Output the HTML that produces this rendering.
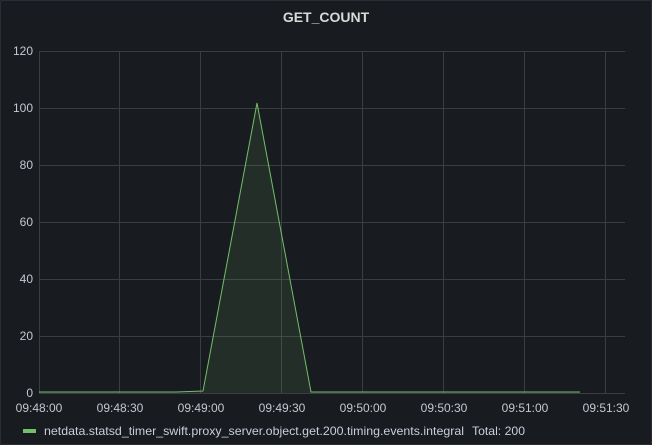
<!DOCTYPE html>
<html><head><style>
body{margin:0;background:#181b1f;}
.p{position:relative;width:650px;height:443px;background:#181b1f;border:1px solid #2a2d33;border-radius:2px;font-family:"Liberation Sans",sans-serif;color:#ccccdc;overflow:hidden}
.t{position:absolute;top:8px;left:0;width:100%;text-align:center;font-size:14px;font-weight:bold;color:#d8d9da}
svg{position:absolute;left:0;top:0}
</style></head><body><div class="p">
<div class="t">GET_COUNT</div>
<svg width="652" height="445" font-family="Liberation Sans, sans-serif" font-size="12" fill="#c7c7cf">
<g stroke="#3a3d42" stroke-width="1">
<line x1="38" y1="50.5" x2="624" y2="50.5"/><line x1="38" y1="107.5" x2="624" y2="107.5"/>
<line x1="38" y1="164.5" x2="624" y2="164.5"/><line x1="38" y1="221.5" x2="624" y2="221.5"/>
<line x1="38" y1="278.5" x2="624" y2="278.5"/><line x1="38" y1="335.5" x2="624" y2="335.5"/>
<line x1="38" y1="392.5" x2="624" y2="392.5"/>
<line x1="38.5" y1="50" x2="38.5" y2="392"/><line x1="118.5" y1="50" x2="118.5" y2="392"/>
<line x1="199.5" y1="50" x2="199.5" y2="392"/><line x1="280.5" y1="50" x2="280.5" y2="392"/>
<line x1="361.5" y1="50" x2="361.5" y2="392"/><line x1="442.5" y1="50" x2="442.5" y2="392"/>
<line x1="523.5" y1="50" x2="523.5" y2="392"/><line x1="604.5" y1="50" x2="604.5" y2="392"/>
</g>
<g text-anchor="end">
<text x="32" y="54">120</text><text x="32" y="111">100</text><text x="32" y="168">80</text>
<text x="32" y="225">60</text><text x="32" y="282">40</text><text x="32" y="339">20</text><text x="32" y="396">0</text>
</g>
<g text-anchor="middle">
<text x="38" y="411">09:48:00</text><text x="119" y="411">09:48:30</text><text x="200" y="411">09:49:00</text>
<text x="281" y="411">09:49:30</text><text x="362" y="411">09:50:00</text><text x="443" y="411">09:50:30</text>
<text x="524" y="411">09:51:00</text><text x="605" y="411">09:51:30</text>
</g>
<path d="M38,391 L175,391 L202,390 L256,102 L310,391 L579,391 L579,392 L38,392Z" fill="#73bf69" fill-opacity="0.12"/>
<path d="M38,391 L175,391 L202,390 L256,102 L310,391 L579,391" fill="none" stroke="#73bf69" stroke-width="1"/>
<rect x="22" y="428" width="13" height="4" fill="#73bf69"/>
<text x="43" y="434" fill="#ccccdc" textLength="420" lengthAdjust="spacingAndGlyphs">netdata.statsd_timer_swift.proxy_server.object.get.200.timing.events.integral</text>
<text x="471" y="434" fill="#ccccdc" textLength="53" lengthAdjust="spacingAndGlyphs">Total: 200</text>
</svg>
</div></body></html>
